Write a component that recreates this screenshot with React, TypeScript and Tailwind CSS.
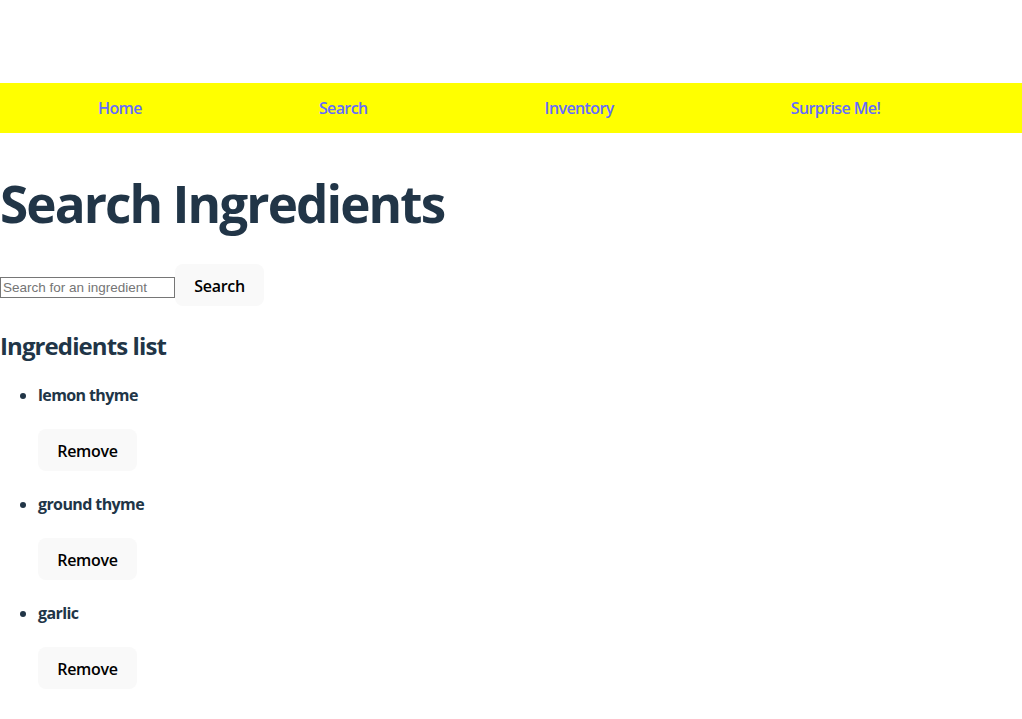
const ingredients = ['lemon thyme', 'ground thyme', 'garlic'];

const navLinks = ['Home', 'Search', 'Inventory', 'Surprise Me!'];

export default function App() {
  return (
    <div className="min-h-screen bg-white font-['Open_Sans',sans-serif] text-[16px] text-[#213547]">
      <div className="h-[83px]" />

      <nav className="flex h-[50px] items-center gap-[177px] bg-[#ffff00] pl-[98px]">
        {navLinks.map((label) => (
          <a key={label} href="#" className="font-semibold text-[#646cff] tracking-[-0.6px]">
            {label}
          </a>
        ))}
      </nav>

      <main>
        <h1 className="mt-[42px] text-[51.2px] font-bold leading-[1.1] tracking-[-1.9px]">
          Search Ingredients
        </h1>

        <div className="mt-[33px] flex items-center">
          <input
            type="text"
            placeholder="Search for an ingredient"
            className="mt-[5px] h-[21px] w-[175px] border border-[#767676] px-[2px] font-['Liberation_Sans',Arial,sans-serif] text-[13.5px] placeholder:text-[#757575]"
          />
          <button
            type="button"
            className="h-[42px] w-[89px] rounded-lg bg-[#f9f9f9] pt-[1px] font-semibold text-black tracking-[-0.3px]"
          >
            Search
          </button>
        </div>

        <h2 className="mt-[22px] text-[24px] font-bold leading-[36px] tracking-[-0.9px]">
          Ingredients list
        </h2>

        <ul className="-mt-[2px] list-disc pl-[38px]">
          {ingredients.map((name) => (
            <li key={name}>
              <h4 className="my-[21px] text-[16px] font-bold leading-[24px] tracking-[-0.6px]">
                {name}
              </h4>
              <button
                type="button"
                className="mt-[1px] h-[42px] w-[99px] rounded-lg bg-[#f9f9f9] pt-[1px] font-semibold text-black tracking-[-0.3px]"
              >
                Remove
              </button>
            </li>
          ))}
        </ul>
      </main>
    </div>
  );
}
